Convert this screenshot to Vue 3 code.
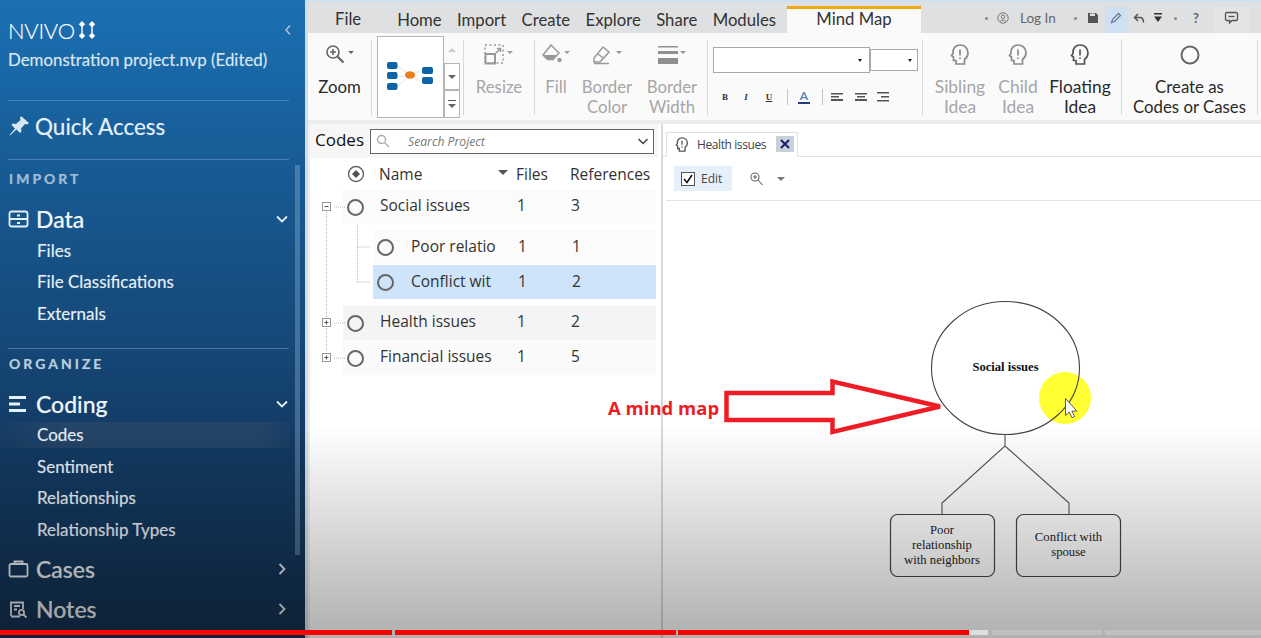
<template>
  <div class="screen">
    <aside class="sidebar">
      <div class="brand">
        <span class="brand-name">NVIVO</span>
        <svg class="brand-mark" width="18" height="18" viewBox="0 0 18 18" fill="#fff">
          <path d="M4 0l3.200 3.200L4 6.400.8 3.200zM14 0l3.200 3.200L14 6.400l-3.200-3.200zM4 11.600l3.200 3.200L4 18 .8 14.800zM14 11.600l3.200 3.200L14 18l-3.200-3.200z" />
          <path d="M3.300 6h1.400v6H3.300zM13.300 6h1.400v6h-1.400z" />
        </svg>
        <svg class="brand-back" width="8" height="12" viewBox="0 0 8 12" fill="none" stroke="#a9c8e4" stroke-width="1.400">
          <path d="M6 1.500L2 6l4 4.500" />
        </svg>
      </div>
      <div class="project">Demonstration project.nvp (Edited)</div>
      <div class="rule rule-top"></div>
      <div class="quick">
        <svg width="22" height="22" viewBox="0 0 22 22" fill="#d8e6f2">
          <path d="M13 1l8 7-2 1.500-2-.5-4 4.500.5 3-1.500 1.500-3.500-3.500L2 20.500l-.5-.5 5.500-6.500L3.500 10 5 8.500l3 .5 4.500-4-.5-2z" />
        </svg>
        <span>Quick Access</span>
      </div>
      <div class="rule rule-quick"></div>

      <section v-for="(section, i) in sections" :key="section.label" class="section">
        <div v-if="i > 0" class="rule rule-section"></div>
        <div class="section-label" :class="{ 'section-label-first': i === 0 }">{{ section.label }}</div>
        <div v-for="item in section.items" :key="item.name" class="nav-group" :class="{ dim: item.dim }">
          <div class="nav-head">
            <svg class="nav-icon" width="21" height="20" viewBox="0 0 21 20" fill="none" stroke="currentColor" stroke-width="1.800">
              <template v-if="item.icon === 'data'">
                <rect x="1.500" y="2.500" width="18" height="15" rx="2" />
                <path d="M1.500 10h18M9 6.500h3M9 14h3" />
              </template>
              <template v-else-if="item.icon === 'coding'">
                <path d="M1 3.500h17M1 10h11M1 16.500h17" stroke-width="3" />
              </template>
              <template v-else-if="item.icon === 'cases'">
                <rect x="1.500" y="5" width="18" height="12.500" rx="1.500" />
                <path d="M6.500 5V2.500h8V5" />
              </template>
              <template v-else>
                <path d="M3 17V3.500h12V10M3 17.500h9M6 7h6M6 10.500h3" />
                <circle cx="13.500" cy="13.500" r="2.600" />
                <path d="M15.500 15.500l3 3" />
              </template>
            </svg>
            <span class="nav-name">{{ item.name }}</span>
            <svg class="nav-chevron" width="14" height="14" viewBox="0 0 14 14" fill="none" stroke="currentColor" stroke-width="1.800">
              <path v-if="item.children" d="M2 4.500l5 5 5-5" />
              <path v-else d="M4.500 2l5 5-5 5" />
            </svg>
          </div>
          <ul v-if="item.children" class="nav-list">
            <li v-for="child in item.children" :key="child" :class="{ current: child === 'Codes' }">{{ child }}</li>
          </ul>
        </div>
      </section>
      <div class="side-scroll"></div>
    </aside>

    <main class="main">
      <div class="top-strip"></div>
      <nav class="tabbar">
        <span class="tab tab-file">File</span>
        <span v-for="tab in tabs" :key="tab" class="tab">{{ tab }}</span>
        <span class="tab-active">Mind Map</span>
        <div class="qa">
          <i class="qa-dot qa-a"></i>
          <svg class="qa-user" width="12" height="12" viewBox="0 0 12 12" fill="none" stroke="#777" stroke-width="1">
            <circle cx="6" cy="6" r="5.200" />
            <circle cx="6" cy="4.800" r="1.800" />
            <path d="M3 9.500c1-1.800 5-1.800 6 0" />
          </svg>
          <span class="qa-login">Log In</span>
          <i class="qa-dot qa-b"></i>
          <svg class="qa-save" width="12" height="12" viewBox="0 0 12 12" fill="#555">
            <path d="M1 1h8l2 2v8H1zM3 1.500V4h5V1.500z" />
          </svg>
          <span class="qa-pen">
            <svg width="12" height="12" viewBox="0 0 12 12" fill="none" stroke="#6b7a90" stroke-width="1.300"><path d="M1.500 10.500l1-3L8.500 1.500l2 2-6 6z" /></svg>
          </span>
          <svg class="qa-undo" width="12" height="11" viewBox="0 0 12 11" fill="none" stroke="#555" stroke-width="1.500">
            <path d="M5 1L1.500 4.500 5 8M2 4.500h5c2.500 0 3.500 2 3.500 5" />
          </svg>
          <svg class="qa-drop" width="8" height="10" viewBox="0 0 8 10" fill="#333">
            <path d="M0 0h8v1.500H0zM0 3.500h8L4 9z" />
          </svg>
          <i class="qa-dot qa-c"></i>
          <span class="qa-help">?</span>
          <span class="qa-comment">
            <svg width="15" height="14" viewBox="0 0 15 14" fill="none" stroke="#555" stroke-width="1.300">
              <path d="M2.500 1.500h10l1 1v6l-1 1H8L5.500 12V9.500h-3l-1-1v-6z" />
              <path d="M4.500 5.500h6" />
            </svg>
          </span>
        </div>
      </nav>

      <div class="ribbon">
        <div class="rb-item rb-zoom">
          <div class="rb-icon">
            <svg width="30" height="22" viewBox="0 0 30 22" fill="none" stroke="#666" stroke-width="1.600">
              <circle cx="8" cy="8" r="6" />
              <path d="M12.500 12.500l6 6" stroke-width="2.200" />
              <path d="M5 8h6M8 5v6" />
              <path d="M23 7h6l-3 3z" fill="#666" stroke="none" />
            </svg>
          </div>
          <div class="rb-label">Zoom</div>
        </div>
        <i class="rb-sep"></i>

        <div class="gallery">
          <div class="gallery-view">
            <svg width="66" height="80" viewBox="0 0 66 80">
              <path d="M20 29L32 38M20 39h12M20 49l12-11M42 34L32 38M42 44L32 38" stroke="#e4e4e4" fill="none" />
              <rect x="9" y="25" width="10.500" height="7" rx="2" fill="#0c63a8" />
              <rect x="9" y="35" width="10.500" height="7" rx="2" fill="#0c63a8" />
              <rect x="9" y="46" width="10.500" height="7" rx="2" fill="#0c63a8" />
              <rect x="44" y="30" width="11" height="7" rx="2" fill="#0c63a8" />
              <rect x="44" y="40" width="11" height="7" rx="2" fill="#0c63a8" />
              <ellipse cx="32" cy="38" rx="5" ry="3.800" fill="#ef7d17" />
            </svg>
          </div>
          <div class="gallery-side">
            <span class="gal-btn gal-up"><i class="tri tri-up"></i></span>
            <span class="gal-btn"><i class="tri"></i></span>
            <span class="gal-btn gal-more"><b></b><i class="tri"></i></span>
          </div>
        </div>
        <i class="rb-sep rb-sep-gallery"></i>

        <div class="rb-item rb-off rb-resize">
          <div class="rb-icon">
            <svg width="30" height="22" viewBox="0 0 30 22" fill="none" stroke="#999" stroke-width="1.500">
              <rect x="1" y="1" width="18" height="18" stroke-dasharray="2 2.500" />
              <rect x="1.500" y="10" width="9.500" height="9.500" stroke-width="2" />
              <path d="M12 9l4-4M13 4.500h3.500V8" />
              <path d="M23 7h6l-3 3z" fill="#999" stroke="none" />
            </svg>
          </div>
          <div class="rb-label">Resize</div>
        </div>
        <i class="rb-sep"></i>

        <div class="rb-item rb-off rb-fill">
          <div class="rb-icon">
            <svg width="28" height="22" viewBox="0 0 28 22" fill="#999">
              <path d="M9 1l8 8-6 6.500H5.500L1 11z" fill="none" stroke="#999" stroke-width="1.500" />
              <path d="M1.500 11H15l-4 4.500H5.500z" />
              <circle cx="17.500" cy="16" r="2.200" />
              <path d="M22 7h6l-3 3z" />
            </svg>
          </div>
          <div class="rb-label">Fill</div>
        </div>
        <div class="rb-item rb-off rb-bcolor">
          <div class="rb-icon">
            <svg width="30" height="22" viewBox="0 0 30 22" fill="none" stroke="#999" stroke-width="1.500">
              <path d="M2 14l9-11 6 5-9 10H2z" />
              <path d="M6 10l6 4.500M2 19.500h15" />
              <path d="M24 7h6l-3 3z" fill="#999" stroke="none" />
            </svg>
          </div>
          <div class="rb-label">Border<br />Color</div>
        </div>
        <div class="rb-item rb-off rb-bwidth">
          <div class="rb-icon">
            <svg width="28" height="20" viewBox="0 0 28 20" fill="#8f8f8f">
              <path d="M0 1h20v1.500H0zM0 6h20v3H0zM0 13h20v6H0z" />
              <path d="M22 6h6l-3 3z" />
            </svg>
          </div>
          <div class="rb-label">Border<br />Width</div>
        </div>
        <i class="rb-sep"></i>

        <div class="font-group">
          <div class="font-selects">
            <span class="select select-name"><i class="tri tri-dark"></i></span>
            <span class="select select-size"><i class="tri tri-dark"></i></span>
          </div>
          <div class="font-tools">
            <b class="ft ft-b">B</b>
            <i class="ft ft-i">I</i>
            <u class="ft ft-u">U</u>
            <s class="ft-sep ft-sep-a"></s>
            <span class="ft-color">A</span>
            <s class="ft-sep ft-sep-b"></s>
            <svg v-for="a in aligns" :key="a.name" class="ft-align" :class="a.name" width="12" height="10" viewBox="0 0 12 10" fill="#555">
              <path :d="a.path" />
            </svg>
          </div>
        </div>
        <i class="rb-sep"></i>

        <div v-for="idea in ideas" :key="idea.name" class="rb-item rb-idea" :class="[idea.cls, { 'rb-off': idea.off }]">
          <div class="rb-icon">
            <svg width="24" height="24" viewBox="0 0 24 24" fill="none" :stroke="idea.off ? '#8b8b8b' : '#555'" stroke-width="1.700">
              <path d="M8 21v-3.500H5.500V14L3.500 12.500 5 10.500C4.500 5 8 2 12 2c4.500 0 8 3 8 8 0 3-1.500 5-3.500 6.500V21z" />
              <path d="M12 6.500v6M12 14.500v1.500" />
            </svg>
          </div>
          <div class="rb-label">{{ idea.name }}<br />Idea</div>
        </div>
        <i class="rb-sep"></i>

        <div class="rb-item rb-create">
          <div class="rb-icon">
            <svg width="22" height="22" viewBox="0 0 22 22" fill="none" stroke="#666" stroke-width="2">
              <circle cx="11" cy="11" r="8.500" />
            </svg>
          </div>
          <div class="rb-label">Create as<br />Codes or Cases</div>
        </div>
        <i class="rb-sep"></i>
      </div>

      <div class="panels">
        <section class="codes">
          <header class="codes-head">
            <span class="codes-title">Codes</span>
            <div class="search">
              <svg width="14" height="14" viewBox="0 0 14 14" fill="none" stroke="#aaa" stroke-width="1.300">
                <circle cx="5.500" cy="5.500" r="4" />
                <path d="M8.500 8.500l4.500 4.500" />
              </svg>
              <span class="search-text">Search Project</span>
              <svg class="search-chevron" width="10" height="7" viewBox="0 0 10 7" fill="none" stroke="#444" stroke-width="1.500">
                <path d="M.5 1l4.500 4.500L9.500 1" />
              </svg>
            </div>
          </header>

          <div class="col-head">
            <svg width="18" height="18" viewBox="0 0 18 18" fill="none" stroke="#666" stroke-width="1.500">
              <circle cx="9" cy="9" r="7.500" />
              <path d="M9 5l4 4-4 4-4-4z" fill="#555" stroke="none" />
            </svg>
            <span class="col-name">Name</span>
            <i class="col-sort"></i>
            <span class="col-files">Files</span>
            <span class="col-refs">References</span>
          </div>

          <div class="code-list">
            <div
              v-for="row in codes"
              :key="row.name"
              class="code-row"
              :class="[row.child ? 'code-child' : 'code-root', row.cls]"
            >
              <i class="code-dot"></i>
              <span class="code-name">{{ row.name }}</span>
              <span class="code-files">{{ row.files }}</span>
              <span class="code-refs">{{ row.refs }}</span>
            </div>
            <svg class="tree" width="60" height="190" viewBox="0 0 60 190" fill="none">
              <g stroke="#b9b9b9" stroke-dasharray="1 1">
                <path d="M16.500 22v140M24 17h11M47.500 35v57M47.500 57h15M47.500 92h15M24 133h11M24 168h11" />
              </g>
              <g stroke="#999" fill="#fff">
                <rect x="12.500" y="12.500" width="8" height="8" />
                <rect x="12.500" y="128.500" width="8" height="8" />
                <rect x="12.500" y="163.500" width="8" height="8" />
              </g>
              <path d="M14.500 16.500h4M14.500 132.500h4M16.500 130.500v4M14.500 167.500h4M16.500 165.500v4" stroke="#555" />
            </svg>
          </div>
        </section>

        <section class="map-pane">
          <div class="doc-tabs">
            <div class="doc-tab">
              <svg width="16" height="17" viewBox="0 0 24 24" fill="none" stroke="#555" stroke-width="2">
                <path d="M8 22v-4H5.500v-3.500L3.500 13 5 10.500C4.500 5 8 2 12 2c4.500 0 8 3 8 8 0 3-1.500 5-3.500 6.500V22z" />
                <path d="M12 6.500v6M12 14.500v2" />
              </svg>
              <span class="doc-name">Health issues</span>
              <span class="doc-close">
                <svg width="10" height="10" viewBox="0 0 10 10" stroke="#14246e" stroke-width="2"><path d="M1 1l8 8M9 1L1 9" /></svg>
              </span>
            </div>
          </div>
          <div class="doc-tools">
            <label class="edit-btn">
              <svg width="14" height="14" viewBox="0 0 14 14" fill="#fff" stroke="#555">
                <rect x=".5" y=".5" width="13" height="13" />
                <path d="M3 7l3 3.500L11 3" fill="none" stroke="#111" stroke-width="1.600" />
              </svg>
              <span>Edit</span>
            </label>
            <svg class="tool-zoom" width="13" height="14" viewBox="0 0 13 14" fill="none" stroke="#666" stroke-width="1.100">
              <circle cx="5" cy="5" r="4" />
              <path d="M8 8l4.500 5M3 5h4M5 3v4" />
            </svg>
            <i class="tool-drop"></i>
          </div>
          <div class="map-canvas">
            <svg class="map" width="598" height="437" viewBox="663 201 598 437">
              <circle cx="1065" cy="398" r="26" fill="#ffff33" />
              <ellipse cx="1005.500" cy="368" rx="74" ry="66.500" fill="none" stroke="#444" stroke-width="1.100" />
              <text x="1005.500" y="371" class="map-title">Social issues</text>
              <path d="M1005 435v11L942 503v11M1005 446l64 57v11" fill="none" stroke="#555" stroke-width="1.100" />
              <rect x="890.500" y="514.500" width="104" height="62" rx="7" fill="none" stroke="#444" stroke-width="1.200" />
              <rect x="1016.500" y="514.500" width="104" height="62" rx="7" fill="none" stroke="#444" stroke-width="1.200" />
              <text x="942" y="534" class="map-node">Poor</text>
              <text x="942" y="549" class="map-node">relationship</text>
              <text x="942" y="564" class="map-node">with neighbors</text>
              <text x="1068.500" y="541" class="map-node">Conflict with</text>
              <text x="1068.500" y="556" class="map-node">spouse</text>
              <path d="M1065.500 398.500v17l3.800-3.400 2.700 5.600 2.600-1.200-2.700-5.400h5z" fill="#fff" stroke="#333" stroke-width=".8" />
            </svg>
          </div>
        </section>
      </div>
    </main>

    <svg class="annotation" width="1261" height="638" viewBox="0 0 1261 638">
      <text x="608" y="415" class="note">A mind map</text>
      <path d="M726.500 393h106v-11.500L940 406.500l-107.500 25.500v-12h-106z" fill="none" stroke="#ee1c25" stroke-width="4.500" />
    </svg>

    <div class="fade"></div>
    <div class="progress">
      <i class="seg seg-a"></i>
      <i class="seg seg-b"></i>
      <i class="seg seg-c"><b></b></i>
      <i class="seg seg-d"></i>
      <i class="seg seg-e"></i>
    </div>
  </div>
</template>

<script setup>
const tabs = ['Home', 'Import', 'Create', 'Explore', 'Share', 'Modules']

const sections = [
  {
    label: 'IMPORT',
    items: [
      { name: 'Data', icon: 'data', children: ['Files', 'File Classifications', 'Externals'] }
    ]
  },
  {
    label: 'ORGANIZE',
    items: [
      { name: 'Coding', icon: 'coding', children: ['Codes', 'Sentiment', 'Relationships', 'Relationship Types'] },
      { name: 'Cases', icon: 'cases', dim: true },
      { name: 'Notes', icon: 'notes', dim: true }
    ]
  }
]

const aligns = [
  { name: 'al-a', path: 'M0 1h12v1.500H0zM0 4h8v1.500H0zM0 7h12v2H0z' },
  { name: 'al-b', path: 'M0 1h12v1.500H0zM2 4h8v1.500H2zM0 7h12v2H0z' },
  { name: 'al-c', path: 'M0 0h12v1.500H0zM4 4h8v1.500H4zM0 8h12v1.500H0z' }
]

const ideas = [
  { name: 'Sibling', cls: 'rb-sibling', off: true },
  { name: 'Child', cls: 'rb-child', off: true },
  { name: 'Floating', cls: 'rb-floating', off: false }
]

const codes = [
  { name: 'Social issues', files: 1, refs: 3, cls: 'row-social' },
  { name: 'Poor relatio', files: 1, refs: 1, child: true, cls: 'row-poor' },
  { name: 'Conflict wit', files: 1, refs: 2, child: true, cls: 'row-conflict' },
  { name: 'Health issues', files: 1, refs: 2, cls: 'row-health' },
  { name: 'Financial issues', files: 1, refs: 5, cls: 'row-financial' }
]
</script>

<style>
html,
body {
  margin: 0;
  background: #fff;
}
</style>

<style scoped>
.screen {
  position: relative;
  display: flex;
  width: 1261px;
  height: 638px;
  overflow: hidden;
  font-family: Lato, "Liberation Sans", sans-serif;
  color: #222;
}

i {
  font-style: normal;
}

/* sidebar */
.sidebar {
  position: relative;
  flex: 0 0 305px;
  box-sizing: border-box;
  padding-top: 17px;
  background: linear-gradient(180deg, #1b70b3 0%, #175c96 25%, #16497a 52%, #123a62 70%, #13304f 100%);
  color: #e6f0f8;
  text-shadow: 0 0 1px rgba(255, 255, 255, 0.35);
}

.brand {
  display: flex;
  align-items: center;
  height: 26px;
  padding-left: 8px;
}

.brand-name {
  font-size: 22px;
  font-weight: 300;
  letter-spacing: -0.3px;
  color: #fff;
}

.brand-mark {
  margin-left: 3px;
}

.brand-back {
  margin-left: auto;
  margin-right: 13px;
}

.project {
  margin: 4px 0 0 8px;
  height: 26px;
  line-height: 26px;
  font-size: 16.850px;
  color: #d6e6f3;
  white-space: nowrap;
}

.rule {
  height: 1px;
  margin: 0 16px 0 8px;
  background: rgba(130, 175, 215, 0.45);
}

.rule-top {
  margin-top: 27px;
}

.quick {
  display: flex;
  align-items: center;
  gap: 5px;
  box-sizing: border-box;
  height: 58px;
  padding: 0 0 8px 8px;
  font-size: 22.500px;
  color: #e6f0f8;
}

.rule-section {
  margin-top: 18.500px;
}

.section-label {
  height: 20px;
  margin: 5px 0 10px 9px;
  line-height: 20px;
  font-size: 14px;
  font-weight: 700;
  letter-spacing: 3px;
  color: #b9cfe0;
}

.section-label-first {
  margin: 9px 0 10px 9px;
  color: #9fbdd6;
}

.nav-head {
  display: flex;
  align-items: center;
  height: 40px;
  padding-left: 8px;
}

.nav-icon {
  flex: none;
}

.nav-name {
  margin-left: 7px;
  font-size: 23px;
  font-weight: 500;
  color: #eef5fa;
}

.nav-chevron {
  margin-left: auto;
  margin-right: 16px;
}

.dim {
  color: #dfe3e6;
}

.dim .nav-name {
  color: #e2e6e9;
}

.nav-list {
  margin: -4.500px 0 3.500px;
  padding: 0;
  list-style: none;
}

.nav-list li {
  height: 31.500px;
  padding-left: 37px;
  line-height: 31.500px;
  font-size: 17px;
  color: #e6eef4;
}

.nav-list li.current {
  background: linear-gradient(90deg, rgba(70, 85, 110, 0.05), rgba(70, 85, 110, 0.32) 20%, rgba(70, 85, 110, 0.32) 90%, rgba(70, 85, 110, 0.1));
  background-size: 100% 26px;
  background-position: 0 3px;
  background-repeat: no-repeat;
  margin-right: 15px;
}

.side-scroll {
  position: absolute;
  left: 295px;
  top: 165px;
  width: 5px;
  height: 390px;
  background: rgba(140, 175, 205, 0.4);
}

/* main */
.main {
  flex: 1;
  display: flex;
  flex-direction: column;
  min-width: 0;
  border-left: 3px solid #d4dde6;
  background: #fff;
}

.top-strip {
  height: 2px;
  background: #cfe0f0;
}

.tabbar {
  display: flex;
  align-items: flex-end;
  height: 31px;
  background: #dfe0e1;
}

.tab {
  height: 27px;
  margin-left: 15.400px;
  line-height: 28px;
  font-size: 16.700px;
  color: #333;
  white-space: nowrap;
}

.tab-file {
  margin-left: 27px;
  margin-right: 20.600px;
  line-height: 26px;
}

.tab-active {
  box-sizing: border-box;
  width: 134px;
  height: 27px;
  margin-left: 11px;
  border-top: 3px solid #efa80f;
  background: #fafafa;
  line-height: 21px;
  text-align: center;
  font-size: 16.700px;
  color: #333;
}

.qa {
  display: flex;
  align-items: center;
  height: 26px;
  align-self: flex-end;
}

.qa > * {
  margin-bottom: 4px;
}

.qa-dot {
  width: 3px;
  height: 3px;
  border-radius: 50%;
  background: #888;
}

.qa-a {
  margin-left: 64px;
}

.qa-user {
  margin-left: 9px;
}

.qa-login {
  width: 34px;
  margin-left: 11px;
  font-size: 13.500px;
  color: #666;
  white-space: nowrap;
}

.qa-b {
  margin-left: 20px;
}

.qa-save {
  margin-left: 10px;
}

.qa-pen {
  display: flex;
  align-items: center;
  justify-content: center;
  box-sizing: border-box;
  width: 23px;
  height: 26px;
  margin-left: 6px;
  margin-bottom: 0;
  padding-bottom: 4px;
  background: #cfe0f5;
}

.qa-undo {
  margin-left: 5px;
}

.qa-drop {
  margin-left: 9px;
}

.qa-c {
  margin-left: 12px;
}

.qa-help {
  width: 10px;
  margin-left: 14px;
  font-size: 13px;
  font-weight: 700;
  color: #666;
  text-align: center;
}

.qa-comment {
  display: flex;
  align-items: center;
  justify-content: center;
  box-sizing: border-box;
  width: 35px;
  height: 26px;
  margin-left: 13px;
  margin-bottom: 0;
  padding-bottom: 4px;
  background: #e3e4e5;
}

/* ribbon */
.ribbon {
  display: flex;
  align-items: flex-start;
  height: 87px;
  flex: none;
  background: #fafafa;
  box-shadow: 0 4px 0 #ececec;
}

.rb-sep {
  flex: none;
  width: 1px;
  height: 75px;
  margin-top: 7px;
  background: #d8d8d8;
}

.rb-sep-gallery {
  margin-left: 3px;
}

.rb-item {
  flex: none;
  text-align: center;
  color: #2a2a2a;
}

.rb-off {
  color: #a6a6a6;
}

.rb-icon {
  display: flex;
  align-items: center;
  justify-content: center;
  height: 44px;
}

.rb-label {
  font-size: 16.800px;
  line-height: 20px;
  white-space: nowrap;
}

.rb-idea .rb-label {
  font-size: 17.400px;
}

.rb-zoom { width: 63px; }
.rb-resize { width: 70px; }
.rb-fill { width: 42px; }
.rb-bcolor { width: 60px; }
.rb-bwidth { width: 70px; }
.rb-sibling { width: 74px; }
.rb-child { width: 42px; }
.rb-floating { width: 82px; }
.rb-create { width: 135px; }

.gallery {
  display: flex;
  flex: none;
  margin: 3px 0 0 5px;
}

.gallery-view {
  box-sizing: border-box;
  width: 67px;
  height: 82px;
  border: 1px solid #b5b5b5;
  background: #fff;
}

.gallery-side {
  display: flex;
  flex-direction: column;
  width: 16px;
}

.gal-btn {
  display: flex;
  flex-direction: column;
  gap: 3px;
  align-items: center;
  justify-content: center;
  box-sizing: border-box;
  height: 27px;
  border: 1px solid #b5b5b5;
  background: #fff;
}

.gal-up {
  border: 0;
  background: transparent;
}

.gal-more b {
  width: 8px;
  height: 1px;
  background: #555;
}

.gal-more {
  height: 28px;
}

.tri {
  width: 0;
  height: 0;
  border-left: 4px solid transparent;
  border-right: 4px solid transparent;
  border-top: 4px solid #666;
}

.tri-up {
  border-top: 0;
  border-bottom: 4px solid #ccc;
}

.font-group {
  flex: none;
  width: 214px;
}

.font-selects {
  display: flex;
  align-items: center;
  height: 26px;
  margin: 14px 0 0 5px;
}

.select {
  display: flex;
  align-items: center;
  justify-content: flex-end;
  box-sizing: border-box;
  border: 1px solid #a8a8a8;
  background: #fff;
}

.select-name {
  width: 157px;
  height: 26px;
  padding-right: 7px;
}

.select-size {
  width: 48px;
  height: 22px;
  padding-right: 5px;
}

.tri-dark {
  border-left-width: 2.500px;
  border-right-width: 2.500px;
  border-top: 3px solid #222;
}

.font-tools {
  display: flex;
  align-items: center;
  height: 16px;
  margin-top: 16px;
}

.ft {
  width: 8px;
  font-family: "Liberation Serif", serif;
  font-size: 9px;
  font-weight: 700;
  line-height: 16px;
  text-align: center;
  color: #333;
}

.ft-b { margin-left: 13px; }
.ft-i { margin-left: 13px; font-style: italic; }
.ft-u { margin-left: 15px; }

.ft-sep {
  width: 1px;
  height: 16px;
  background: #c4c4c4;
}

.ft-sep-a { margin-left: 14px; }

.ft-color {
  width: 12px;
  margin-left: 10px;
  border-bottom: 2px solid #1f3f7a;
  font-size: 12px;
  font-weight: 700;
  line-height: 12px;
  text-align: center;
  color: #5d87b8;
}

.ft-sep-b { margin-left: 12px; }

.ft-align.al-a { margin-left: 8px; }
.ft-align.al-b { margin-left: 12px; }
.ft-align.al-c { margin-left: 10px; }

/* lower panels */
.panels {
  flex: 1;
  display: flex;
  min-height: 0;
  margin-top: 4px;
  padding-left: 2px;
  background: linear-gradient(90deg, #eee 2px, #fff 2px);
}

.codes {
  flex: 0 0 351px;
  border-right: 2px solid #d9d9d9;
}

.codes-head {
  display: flex;
  align-items: center;
  gap: 6px;
  height: 34px;
  padding-left: 5px;
  box-sizing: border-box;
  margin-right: 3px;
  background: #f6f6f6;
}

.codes-title {
  margin-top: -3px;
  font-family: "Open Sans", sans-serif;
  font-size: 17px;
  color: #111;
}

.search {
  display: flex;
  align-items: center;
  box-sizing: border-box;
  width: 284px;
  height: 25px;
  padding: 0 5px;
  border: 1px solid #666;
  background: #fff;
}

.search-text {
  margin-left: 18px;
  font-family: "Open Sans", sans-serif;
  font-size: 12.200px;
  font-style: italic;
  color: #777;
}

.search-chevron {
  margin-left: auto;
}

.col-head {
  display: flex;
  align-items: center;
  height: 32px;
  padding-left: 37px;
  font-family: "Open Sans", sans-serif;
  font-size: 15.500px;
  color: #333;
}

.col-name {
  width: 137px;
  margin-left: 14px;
}

.col-sort {
  width: 0;
  height: 0;
  margin: -3px 8px 0 -18px;
  border-left: 5px solid transparent;
  border-right: 5px solid transparent;
  border-top: 5px solid #555;
}

.col-files {
  width: 54px;
}

.col-refs {
  white-space: nowrap;
}

.code-list {
  position: relative;
}

.code-row {
  display: flex;
  align-items: center;
  height: 34px;
  margin-right: 5px;
  font-family: "Open Sans", sans-serif;
  font-size: 15.500px;
  color: #333;
}

.code-root {
  margin-left: 33px;
}

.code-child {
  margin-left: 63px;
}

.row-social,
.row-poor {
  background: #fbfbfb;
}

.row-poor {
  margin-top: 6px;
}

.row-conflict {
  margin-top: 1px;
  background: #cde4fb;
}

.row-health {
  margin-top: 7px;
  background: #f4f4f4;
}

.row-financial {
  margin-top: 1px;
  background: #fafafa;
}

.code-dot {
  flex: none;
  box-sizing: border-box;
  width: 17px;
  height: 17px;
  margin-left: 4px;
  border: 2px solid #666;
  border-radius: 50%;
}

.code-name {
  margin-left: 16px;
  margin-top: -5px;
  white-space: nowrap;
}

.code-root .code-name { width: 137px; }
.code-child .code-name { width: 107px; margin-left: 17px; margin-top: -3px; }

.code-files {
  width: 54px;
  margin-top: -5px;
}

.code-refs {
  margin-top: -5px;
}

.code-child .code-files,
.code-child .code-refs {
  margin-top: -3px;
}

.tree {
  position: absolute;
  left: 0;
  top: 0;
}

.map-pane {
  flex: 1;
  display: flex;
  flex-direction: column;
  min-width: 0;
}

.doc-tabs {
  box-sizing: border-box;
  height: 33px;
  padding: 8px 0 0 3px;
  border-bottom: 1px solid #e4e4e4;
}

.doc-tab {
  display: flex;
  align-items: center;
  box-sizing: border-box;
  width: 132px;
  height: 25px;
  padding: 0 0 2px 7px;
  border: 1px solid #e0e0e0;
  border-bottom: 0;
  background: #fff;
}

.doc-name {
  margin-left: 7px;
  font-family: "Open Sans", sans-serif;
  font-size: 12px;
  letter-spacing: -0.4px;
  color: #444;
}

.doc-close {
  display: flex;
  align-items: center;
  justify-content: center;
  width: 18px;
  height: 16px;
  margin-left: auto;
  margin-right: 3px;
  background: #c8d0dc;
}

.doc-tools {
  display: flex;
  align-items: center;
  box-sizing: border-box;
  height: 44px;
  padding-left: 11px;
  margin-left: 3px;
  border-bottom: 1px solid #e4e4e4;
}

.edit-btn {
  display: flex;
  align-items: center;
  gap: 6px;
  box-sizing: border-box;
  width: 58px;
  height: 25px;
  padding-left: 7px;
  margin-left: -3px;
  background: #e6f0fa;
  font-family: "Open Sans", sans-serif;
  font-size: 12px;
  color: #444;
}

.tool-zoom {
  margin-left: 18px;
}

.tool-drop {
  width: 0;
  height: 0;
  margin-left: 14px;
  border-left: 4px solid transparent;
  border-right: 4px solid transparent;
  border-top: 4px solid #777;
}

.map-canvas {
  flex: 1;
  min-height: 0;
}

.map {
  display: block;
}

.map-title {
  font-family: "Liberation Serif", serif;
  font-size: 12.600px;
  font-weight: 700;
  text-anchor: middle;
  fill: #111;
}

.map-node {
  font-family: "Liberation Serif", serif;
  font-size: 12.700px;
  text-anchor: middle;
  fill: #222;
}

/* things on top */
.annotation {
  position: absolute;
  left: 0;
  top: 0;
  pointer-events: none;
}

.note {
  font-family: "Open Sans", sans-serif;
  font-size: 18.500px;
  font-weight: 700;
  fill: #ee1c25;
}

.fade {
  position: absolute;
  left: 0;
  right: 0;
  top: 425px;
  bottom: 0;
  background: linear-gradient(180deg, rgba(0, 0, 0, 0), rgba(0, 0, 0, 0.31));
  pointer-events: none;
}

.progress {
  position: absolute;
  left: 0;
  right: 0;
  top: 630px;
  display: flex;
  height: 5px;
}

.seg {
  display: block;
  height: 5px;
  margin-right: 3px;
  background: #f00;
}

.seg-a { width: 392px; }
.seg-b { width: 281px; margin-right: 2px; }

.seg-c {
  width: 310px;
  background: #dedede;
}

.seg-c b {
  display: block;
  width: 291px;
  height: 5px;
  background: #f00;
}

.seg-d {
  width: 110px;
  margin-left: 1px;
  background: rgba(255, 255, 255, 0.18);
}

.seg-e {
  flex: 1;
  margin-right: 0;
  background: rgba(255, 255, 255, 0.18);
}
</style>
